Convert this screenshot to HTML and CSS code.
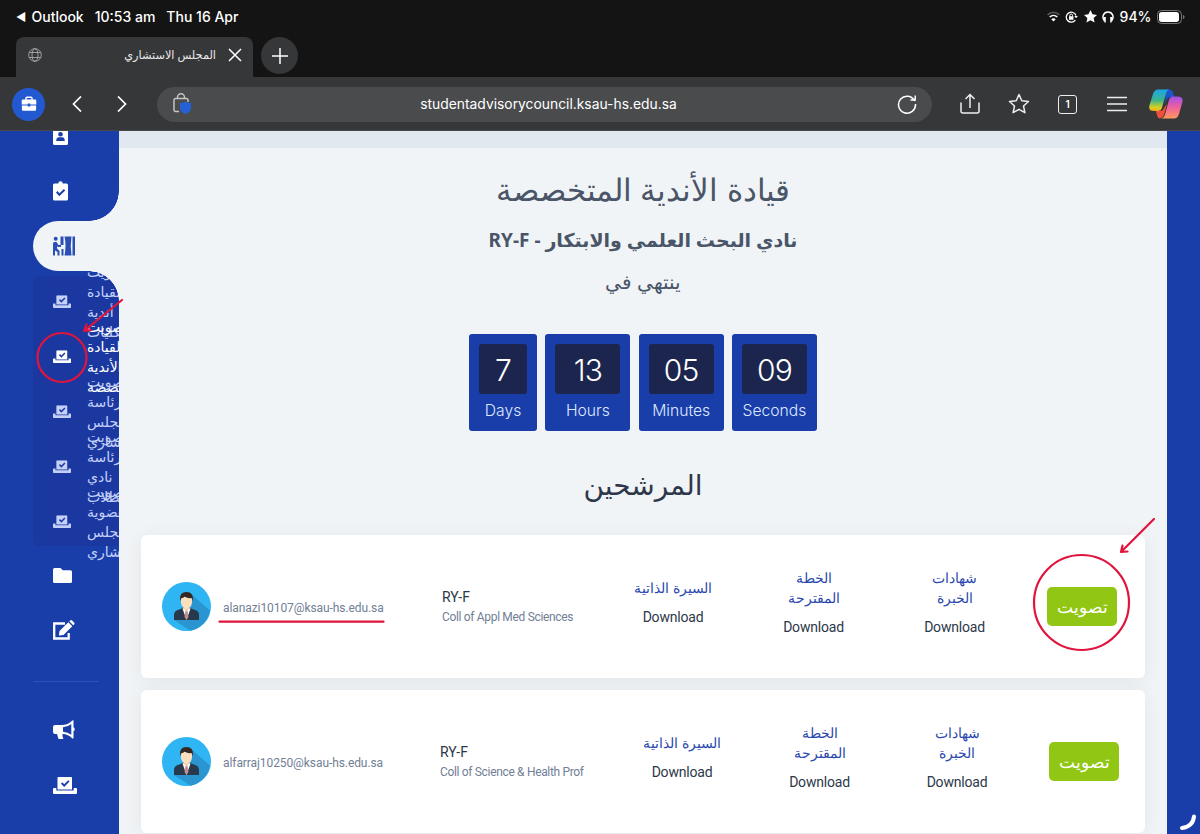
FILE: index.html
```
<!DOCTYPE html>
<html lang="ar">
  <head>
    <meta charset="UTF-8" />
    <meta name="viewport" content="width=device-width, initial-scale=1.0" />
    <title>المجلس الاستشاري</title>
    <link rel="stylesheet" href="styles.css">
  </head>
  <body>
    <svg class="defs" width="0" height="0">
      <symbol id="i-vote" viewBox="0 0 24 17">
        <path fill="currentColor" fill-rule="evenodd" d="M5.500 0h12.500a1 1 0 0 1 1 1v11.500h-14.500V1a1 1 0 0 1 1-1zM8 6.700l3.200 3.300 5.300-5.500-1.300-1.300-4 4.100-1.900-2z"/>
        <path fill="currentColor" d="M1 11h2.300v2.500h17.400V11H23a1 1 0 0 1 1 1v4a1 1 0 0 1-1 1H1a1 1 0 0 1-1-1v-4a1 1 0 0 1 1-1z"/>
      </symbol>
      <symbol id="i-avatar" viewBox="0 0 49 49">
        <circle cx="24.500" cy="24.500" r="24.500" fill="#2fb5f3"/>
        <path fill="#2a95d0" d="M29 12l19 16.500a24.500 24.500 0 0 1-20 20L12 38z"/>
        <path fill="#27394b" d="M12 38v-5c0-3 2-4.500 4-5l6-2.500h5l6 2.500c2 .5 4 2 4 5v5z"/>
        <path fill="#fff" d="M20.500 26.500l4 11.500 4-11.500-4-1z"/>
        <path fill="#f3c9a5" d="M21.800 23h5.400v3.500l-2.700 3-2.700-3z"/>
        <path fill="#c88b8f" d="M23.500 29h2l1 6-2 3-2-3z"/>
        <path fill="#fbe0c0" d="M19 15h11v5c0 4-3 7-5.500 7S19 24 19 20z"/>
        <path fill="#352821" d="M18.500 19c-1.500-6 1.500-9 6-9s7.500 3 6 9l-1-3c-3 .5-6-.5-7-1.500-.8 1-2 1.500-3 1.500z"/>
      </symbol>
    </svg>

    <div class="status-bar">
      <span class="back">◀</span><span>Outlook</span><span class="time">10:53 am</span><span>Thu 16 Apr</span>
      <div class="status-icons">
        <svg width="13" height="11" viewBox="0 0 13 11" fill="none" stroke-width="1.700"><path stroke="#555" d="M.6 3.800a8.500 8.500 0 0 1 11.800 0"/><path stroke="#fff" d="M2.700 6a5.500 5.500 0 0 1 7.600 0"/><path fill="#fff" d="M6.500 10.500L4.300 8.200a3.200 3.200 0 0 1 4.400 0z"/></svg>
        <svg width="13" height="12" viewBox="0 0 13 12"><path fill="none" stroke="#fff" stroke-width="1.300" d="M10.300 9.200A5 5 0 1 1 11 4.500"/><path fill="#fff" d="M9.300 5h3.600L11 7.300zM4 5.300h4.400v3.400H4z"/><path fill="none" stroke="#fff" d="M4.900 5.500V4.300a1.300 1.300 0 0 1 2.600 0v1.200"/></svg>
        <svg width="13" height="13" viewBox="0 0 24 24"><path fill="#fff" d="M12 0l3.700 8 8.300 1-6.200 5.700L19.500 23 12 18.800 4.500 23l1.700-8.300L0 9l8.300-1z"/></svg>
        <svg width="12" height="12" viewBox="0 0 12 12"><path fill="none" stroke="#fff" stroke-width="1.500" d="M2.500 10C-.7 6 1.500 1 6 1s6.700 5 3.500 9"/><path fill="#fff" d="M1.600 6h2.200v5.500H2.400zM10.400 6H8.200v5.500h1.400z"/></svg>
        <span>94%</span>
        <svg width="28" height="14" viewBox="0 0 28 14"><rect x=".5" y=".5" width="24" height="13" rx="4" fill="none" stroke="#777"/><rect x="2" y="2" width="20" height="10" rx="2.700" fill="#fff"/><path fill="#777" d="M26 5c2 .5 2 3.500 0 4z"/></svg>
      </div>
    </div>

    <div class="tab-bar">
      <div class="tab">
        <svg width="14" height="14" viewBox="0 0 14 14" fill="none" stroke="#b5b6b8" stroke-width=".8"><circle cx="7" cy="7" r="6.300"/><ellipse cx="7" cy="7" rx="3" ry="6.300"/><path d="M1.300 4.500h11.400M1.300 9.500h11.400"/></svg>
        <span class="tab-title" dir="rtl">المجلس الاستشاري</span>
        <svg width="14" height="14" viewBox="0 0 14 14" stroke="#fff" stroke-width="1.500"><path d="M1 1l12 12M13 1L1 13"/></svg>
      </div>
      <div class="new-tab">
        <svg width="16" height="16" viewBox="0 0 16 16" stroke="#fff" stroke-width="1.500"><path d="M8 0v16M0 8h16"/></svg>
      </div>
    </div>

    <div class="toolbar">
      <div class="profile">
        <svg width="16" height="16" viewBox="0 0 16 16"><path fill="none" stroke="#fff" stroke-width="1.400" d="M5 4V2.200Q5 1.200 6 1.200h4q1 0 1 1V4"/><path fill="#fff" d="M2 3.500h12a1.300 1.300 0 0 1 1.300 1.300V8.500H9.300V7.600H6.700v.9H.7V4.800A1.300 1.300 0 0 1 2 3.500zM.9 9.500h5.800v1h2.600v-1h5.800v4a1.300 1.300 0 0 1-1.300 1.300H2.200A1.300 1.300 0 0 1 .9 13.500z"/></svg>
      </div>
      <svg class="nav-back" width="10" height="16" viewBox="0 0 10 16" fill="none" stroke="#fff" stroke-width="1.700"><path d="M9 .5L1.500 8 9 15.500"/></svg>
      <svg class="nav-next" width="10" height="16" viewBox="0 0 10 16" fill="none" stroke="#fff" stroke-width="1.700"><path d="M1 .5L8.500 8 1 15.500"/></svg>
      <div class="address">
        <svg width="19" height="22" viewBox="0 0 19 22"><path fill="none" stroke="#c4c4c5" stroke-width="1.500" d="M6 18.500H2.700Q1 18.500 1 16.800V7Q1 5.500 2.700 5.500h10.600Q15 5.500 15 7v2M4.500 5.500V4.200a3.500 3.500 0 0 1 7 0v1.300"/><path fill="#2560d8" d="M12.500 8.500q3 1.800 5.500 1.500v4.500q0 4.500-5.500 6.500Q7 19 7 14.500V10q3 .3 5.500-1.500z"/></svg>
        <span class="url">studentadvisorycouncil.ksau-hs.edu.sa</span>
        <svg width="20" height="20" viewBox="0 0 20 20" fill="none" stroke="#fff" stroke-width="1.500"><path d="M17.700 7A8.500 8.500 0 1 0 18.500 10M13.500 6h4.700V1.500"/></svg>
      </div>
      <div class="actions">
        <svg width="20" height="22" viewBox="0 0 20 22" fill="none" stroke="#eee" stroke-width="1.500"><path d="M1 9.500V18q0 2 2 2h14q2 0 2-2V9.500M10 15V1.500M5.500 6L10 1.500 14.500 6"/></svg>
        <svg width="22" height="22" viewBox="0 0 22 22" fill="none" stroke="#eee" stroke-width="1.500" stroke-linejoin="round"><path d="M11 1.500l2.800 6.200 6.700.8-5 4.500 1.400 6.700L11 16.300l-5.900 3.400L6.500 13l-5-4.500 6.700-.8z"/></svg>
        <div class="tab-count">1</div>
        <svg width="22" height="16" viewBox="0 0 22 16" stroke="#eee" stroke-width="1.500"><path d="M1 1.500h20M1 8h20M1 14.500h20"/></svg>
        <svg width="34" height="30" viewBox="0 0 34 30">
          <defs>
            <linearGradient id="cp1" x1="0" y1="0" x2="0" y2="1"><stop offset="0" stop-color="#1ba6e8"/><stop offset=".5" stop-color="#3bb58d"/><stop offset=".85" stop-color="#dfd11d"/><stop offset="1" stop-color="#f7a021"/></linearGradient>
            <linearGradient id="cp2" x1="0" y1="0" x2="0" y2="1"><stop offset="0" stop-color="#a050e8"/><stop offset=".5" stop-color="#f0609c"/><stop offset="1" stop-color="#ff9a5a"/></linearGradient>
          </defs>
          <path fill="#1d55d0" d="M17 .5h3q3 0 4 3l1.500 4.500h-4q-3 0-4 3L16 15z"/>
          <path fill="#f0503a" d="M18 15l-3 11q-1 3-4 3.500-2 0-3-3L7 22h4q3 0 4-3z"/>
          <path fill="url(#cp1)" d="M9 .5h11q-2 .5-3 4l-4 14q-1 3.500-4 3.500H5q-6 0-4.500-6L4 5q1.500-4.500 5-4.500z"/>
          <path fill="url(#cp2)" d="M25 29.500H12q3-.5 4-4L20 11q1-3.500 4-3.500h4q7 0 5.300 6L30 25q-1.500 4.500-5 4.500z"/>
        </svg>
      </div>
    </div>

    <div class="page">
      <nav class="sidebar">
        <a class="item"><svg width="15" height="18" viewBox="0 0 14 18" preserveAspectRatio="none"><path fill="#fff" fill-rule="evenodd" d="M1.500 0h11A1.500 1.500 0 0 1 14 1.500v15a1.500 1.500 0 0 1-1.500 1.500h-11A1.500 1.500 0 0 1 0 16.500v-15A1.500 1.500 0 0 1 1.500 0zM7 5a2.200 2.200 0 1 0 0 4.400A2.200 2.200 0 0 0 7 5zM3 14h8q0-3.800-2.500-3.800h-3Q3 10.200 3 14z"/></svg></a>
        <a class="item"><svg width="15" height="20" viewBox="0 0 15 20"><path fill="#fff" fill-rule="evenodd" d="M5.300 2.500a2.200 2.200 0 0 1 4.400 0h3.800A1.500 1.500 0 0 1 15 4v14a1.500 1.500 0 0 1-1.500 1.500h-12A1.500 1.500 0 0 1 0 18V4a1.500 1.500 0 0 1 1.500-1.500zM3 11.500l3.300 3.700 5.900-5.700-1.300-1.500-4.500 4.300-1.900-2.200z"/></svg></a>
        <a class="item active"><svg width="22" height="20" viewBox="0 0 22 20" fill="#2b4fb4"><circle cx="2.700" cy="2.700" r="2"/><path d="M0 7.500Q0 6 1.500 6h2l2 3H8v2H4.700L4 10v2.500L6.500 15v4.500h-2V16L2 14.500v5H0zM7.500.5h3V9h-3zM8.500 13h2v6.500h-2zM11.500.5h7q-1.500 9 0 19h-7q2-10 0-19zM19.500.5H22v19h-2.500z"/></svg></a>
        <div class="submenu">
          <a class="item"><svg width="18" height="13" viewBox="0 0 24 17"><use href="#i-vote"/></svg><span>التصويت لقيادة أندية الكليات</span></a>
          <a class="item current"><svg width="18" height="13" viewBox="0 0 24 17"><use href="#i-vote"/></svg><span>التصويت لقيادة الأندية المتخصصة</span></a>
          <a class="item"><svg width="18" height="13" viewBox="0 0 24 17"><use href="#i-vote"/></svg><span>التصويت لرئاسة المجلس الاستشاري</span></a>
          <a class="item"><svg width="18" height="13" viewBox="0 0 24 17"><use href="#i-vote"/></svg><span>التصويت لرئاسة نادي الطلاب</span></a>
          <a class="item"><svg width="18" height="13" viewBox="0 0 24 17"><use href="#i-vote"/></svg><span>التصويت لعضوية المجلس الاستشاري</span></a>
        </div>
        <a class="item"><svg width="19" height="15" viewBox="0 0 19 15"><path fill="#fff" d="M1.500 0h6l2.300 2.200h7.700A1.500 1.500 0 0 1 19 3.700v9.800a1.500 1.500 0 0 1-1.500 1.500h-16A1.500 1.500 0 0 1 0 13.500v-12A1.500 1.500 0 0 1 1.500 0z"/></svg></a>
        <a class="item"><svg width="22" height="20" viewBox="0 0 22 20"><path fill="none" stroke="#fff" stroke-width="2.300" d="M12 3.500H1.200v15h14.500V13"/><path fill="#fff" d="M15.300 2.300l4 4L10.500 15l-4.600.6.600-4.600zM16.300 1.300l.8-.8q1-.8 2 0l2 2q.9 1 0 2l-.9.8z"/></svg></a>
        <hr>
        <a class="item"><svg width="22" height="20" viewBox="0 0 22 20"><path fill="#fff" fill-rule="evenodd" d="M20.500.2v7q1.200.6 1.200 2t-1.200 2v7l-1.200.3q-4-4.300-9.800-4.500v2l.8 3H5.500L4 14H2q-2 0-2-2V7q0-2 2-2h6.500Q15 5 19.300.5zM18.300 4q-3.500 3-8.300 3.300v4.400q4.800.3 8.300 3z"/></svg></a>
        <a class="item"><svg width="24" height="17" viewBox="0 0 24 17" color="#fff"><use href="#i-vote"/></svg></a>
      </nav>

      <main class="content">
        <div class="heading">
          <h1 dir="rtl">قيادة الأندية المتخصصة</h1>
          <h2 dir="rtl">نادي البحث العلمي والابتكار - RY-F</h2>
          <p class="ends" dir="rtl">ينتهي في</p>
        </div>

        <div class="countdown">
          <div class="unit days"><b>7</b>Days</div>
          <div class="unit"><b>13</b>Hours</div>
          <div class="unit"><b>05</b>Minutes</div>
          <div class="unit"><b>09</b>Seconds</div>
        </div>

        <h3 class="title" dir="rtl">المرشحين</h3>

        <div class="card">
          <svg class="avatar" width="49" height="49"><use href="#i-avatar"/></svg>
          <div class="email">alanazi10107@ksau-hs.edu.sa</div>
          <div class="college"><strong>RY-F</strong><small>Coll of Appl Med Sciences</small></div>
          <div class="file"><a dir="rtl">السيرة الذاتية</a><span>Download</span></div>
          <div class="file"><a dir="rtl">الخطة<br>المقترحة</a><span>Download</span></div>
          <div class="file"><a dir="rtl">شهادات<br>الخبرة</a><span>Download</span></div>
          <button class="vote">تصويت</button>
        </div>

        <div class="card second">
          <svg class="avatar" width="49" height="49"><use href="#i-avatar"/></svg>
          <div class="email">alfarraj10250@ksau-hs.edu.sa</div>
          <div class="college"><strong>RY-F</strong><small>Coll of Science &amp; Health Prof</small></div>
          <div class="file"><a dir="rtl">السيرة الذاتية</a><span>Download</span></div>
          <div class="file"><a dir="rtl">الخطة<br>المقترحة</a><span>Download</span></div>
          <div class="file"><a dir="rtl">شهادات<br>الخبرة</a><span>Download</span></div>
          <button class="vote">تصويت</button>
        </div>
      </main>

      <div class="edge"></div>
    </div>

    <!-- red marker notes and the window resize corner -->
    <svg class="notes" width="1200" height="834" viewBox="0 0 1200 834" fill="none" stroke="#e0143c" stroke-width="2.200" stroke-linecap="round">
      <circle cx="62" cy="357.500" r="24.500"/>
      <path d="M122 300L84 331M84 331l2.500-6.500M84 331l7-.8"/>
      <path d="M219.500 621.700h164"/>
      <circle cx="1081.500" cy="602.500" r="47.500"/>
      <path d="M1154 519l-33 33M1121 552l1.500-6.500M1121 552l6.500-.5"/>
      <path stroke="#fff" stroke-width="4" d="M1194 816.500q-1 10-12 11.500"/>
    </svg>
  </body>
</html>
```
FILE: styles.css
```
* {
  box-sizing: border-box;
}
body {
  margin: 0;
  width: 1200px;
  height: 834px;
  display: flex;
  flex-direction: column;
  overflow: hidden;
  font-family: 'Noto Sans', 'DejaVu Sans', sans-serif;
  background: #141414;
}
svg {
  flex: none;
  display: block;
}
.defs {
  position: absolute;
}

/* browser chrome */
.status-bar {
  height: 33px;
  flex: none;
  display: flex;
  align-items: center;
  padding: 0 15px 0 16px;
  color: #fff;
  font: 500 14px Inter, sans-serif;
}
.back {
  width: 15.5px;
  font-size: 11px;
}
.time {
  margin: 0 11px;
}
.status-icons {
  display: flex;
  align-items: center;
  gap: 5.5px;
  margin-left: auto;
}
.tab-bar {
  height: 44px;
  flex: none;
  display: flex;
  align-items: flex-start;
  padding: 4px 16px 0;
  gap: 8px;
}
.tab {
  width: 237px;
  height: 40px;
  display: flex;
  align-items: center;
  padding: 0 11px 4px 12px;
  border-radius: 8px 8px 0 0;
  background: #363739;
}
.tab-title {
  flex: 1;
  margin: -2px 12px 0;
  color: #e8e8e8;
  font-size: 11.3px;
}
.new-tab {
  width: 37px;
  height: 37px;
  display: grid;
  place-items: center;
  border-radius: 50%;
  background: #363739;
}
.toolbar {
  height: 54px;
  flex: none;
  display: flex;
  align-items: center;
  padding: 1px 0 0 12px;
  background: #363739;
  border-bottom: 1px solid #46484c;
}
.profile {
  width: 33px;
  height: 33px;
  display: grid;
  place-items: center;
  border-radius: 50%;
  background: #2359d0;
}
.nav-back {
  margin-left: 27px;
}
.nav-next {
  margin-left: 35px;
}
.address {
  width: 775px;
  height: 35px;
  display: flex;
  align-items: center;
  margin-left: 30px;
  padding: 0 15px 0 16px;
  border-radius: 18px;
  background: #4a4b4d;
}
.url {
  flex: 1;
  padding-left: 8px;
  text-align: center;
  color: #fff;
  font: 13.85px Inter, sans-serif;
}
.actions {
  display: grid;
  grid-template-columns: repeat(5, 49px);
  align-items: center;
  justify-items: center;
  padding-left: 13px;
}
.tab-count {
  width: 19px;
  height: 19px;
  border: 1.5px solid #eee;
  border-radius: 3px;
  color: #fff;
  font: 600 10px/16px Inter, sans-serif;
  text-align: center;
}

/* page */
.page {
  height: 703px;
  display: flex;
  background: #f0f4f7;
}
.sidebar {
  width: 119px;
  display: flex;
  flex-direction: column;
  gap: 5px;
  overflow: hidden;
  background: #1a3ea9;
}
.item {
  height: 50px;
  flex: none;
  display: flex;
  align-items: center;
  padding-left: 53px;
}
.sidebar > .item:first-child {
  margin-top: -20px;
}
.active {
  position: relative;
  z-index: 1;
  margin-left: 33px;
  padding-left: 20px;
  border-radius: 25px 0 0 25px;
  background: #f0f4f7;
}
/* rounded joins above and below the active item */
.active::before,
.active::after {
  content: '';
  position: absolute;
  right: 0;
  width: 30px;
  height: 30px;
}
.active::before {
  bottom: 100%;
  background: radial-gradient(circle at 0 0, transparent 29.5px, #f0f4f7 30px);
}
.active::after {
  top: 100%;
  background: radial-gradient(circle at 0 100%, transparent 29.5px, #f0f4f7 30px);
}
.submenu {
  display: flex;
  flex-direction: column;
  gap: 5px;
  flex: none;
  margin: 0 0 -1px 33px;
  border-radius: 6px 0 0 6px;
  background: #1b38a0;
}
.submenu .item {
  padding-left: 20px;
  color: #c4d0f8;
}
.submenu .current {
  color: #fff;
}
.submenu span {
  width: 32px;
  flex: none;
  margin: 1px 0 0 16px;
  font-size: 14px;
  line-height: 20px;
}
hr {
  width: 66px;
  margin: 21px 0 18px 33px;
  border: 0;
  border-top: 1px solid #3052b8;
}
.content {
  width: 1048px;
  padding: 0 22px;
  border-top: 17px solid #e2e8f0;
}
.edge {
  flex: 1;
  background: #1a3ea9;
}
h1, h2, h3, p {
  margin: 0;
  text-align: center;
  color: #4a5568;
}
h1 {
  margin-top: 19px;
  font-size: 31px;
  line-height: 44px;
  font-weight: 300;
}
h2 {
  margin-top: 14px;
  font-size: 19px;
  line-height: 30px;
  font-weight: 700;
}
.ends {
  margin-top: 12px;
  font-size: 20px;
  line-height: 30px;
  font-weight: 300;
}
.countdown {
  display: flex;
  justify-content: center;
  gap: 8.3px;
  margin-top: 37px;
}
.unit {
  width: 85px;
  height: 97px;
  padding: 10px;
  border-radius: 3px;
  background: #1a3ea9;
  color: #dfe8ff;
  font: 300 15.7px/33px Inter, sans-serif;
  text-align: center;
}
.days {
  width: 68px;
}
.unit b {
  display: block;
  height: 50px;
  border-radius: 3px;
  background: #1c254d;
  color: #fff;
  font: 300 30px/53px Inter, sans-serif;
  letter-spacing: -.8px;
}
.title {
  margin: 30px 0 28px;
  color: #2d3748;
  font-size: 28px;
  line-height: 46px;
  font-weight: 400;
}
.card {
  height: 143px;
  display: grid;
  grid-template-columns: 61px 219px 171px 120px 161px 121px 1fr;
  align-items: center;
  margin-bottom: 12px;
  padding-left: 21px;
  border-radius: 6px;
  background: #fff;
  box-shadow: 0 3px 20px rgba(0, 0, 0, .06);
  font-family: Roboto, 'Noto Sans', sans-serif;
}
.second {
  grid-template-columns: 61px 217px 182px 120px 155px 120px 1fr;
}
.email {
  padding-top: 2px;
  color: #718096;
  font-size: 12px;
  letter-spacing: -.08px;
}
.college strong,
.college small {
  display: block;
  color: #2d3748;
  font-size: 14px;
  font-weight: 400;
  line-height: 20px;
}
.college small {
  color: #718096;
  font-size: 12px;
  letter-spacing: -.33px;
}
.file {
  padding-bottom: 8px;
  text-align: center;
  color: #2d3748;
  font-size: 14px;
  line-height: 20px;
  letter-spacing: -.2px;
}
.file a {
  display: block;
  margin-bottom: 9px;
  color: #2a48ae;
  font-family: 'Noto Sans', sans-serif;
  letter-spacing: normal;
}
.vote {
  width: 70px;
  height: 39px;
  margin-left: 32px;
  padding: 0;
  border: 0;
  border-radius: 5px;
  background: #91c714;
  color: #fff;
  font: 17px 'Noto Sans', sans-serif;
}
.notes {
  position: absolute;
  left: 0;
  top: 0;
}
```
